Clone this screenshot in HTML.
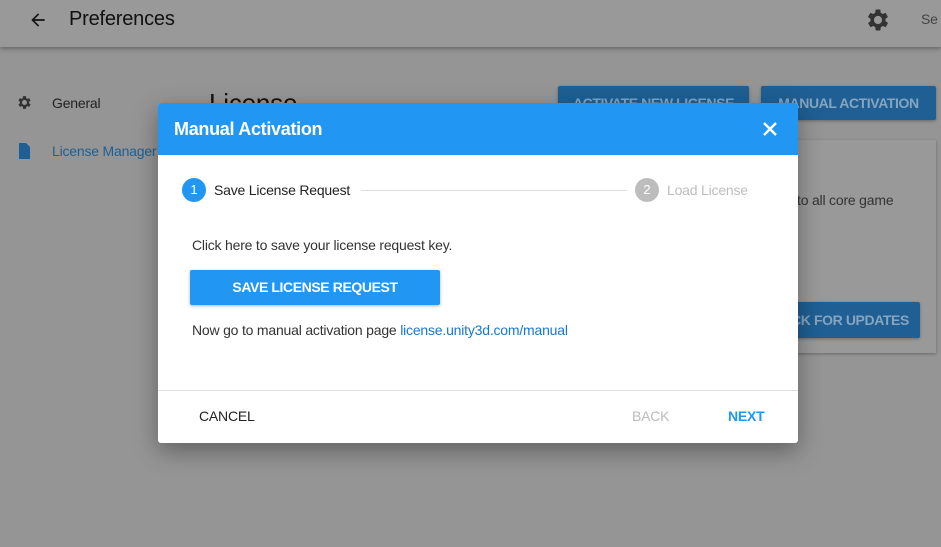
<!DOCTYPE html>
<html><head><meta charset="utf-8"><style>
*{margin:0;padding:0;box-sizing:border-box}
body{width:941px;height:547px;overflow:hidden;background:#959595;font-family:"Liberation Sans",sans-serif;position:relative}
.hdr{position:absolute;left:0;top:0;width:941px;height:47px;background:#999;box-shadow:0 2px 4px rgba(0,0,0,.3)}
.t{position:absolute;white-space:nowrap;letter-spacing:-0.2px}
.btn{position:absolute;background:#1f5f93;color:#85a5c0;font-weight:bold;font-size:14px;text-align:center;line-height:34px;border-radius:2px;box-shadow:0 1px 3px rgba(0,0,0,.3);letter-spacing:-0.4px}
.card{position:absolute;left:780px;top:140px;width:156px;height:213px;background:#999;box-shadow:0 1px 3px rgba(0,0,0,.3)}
.dlg{position:absolute;left:158px;top:103px;width:640px;height:340px;background:#fff;border-radius:3px;box-shadow:0 8px 24px rgba(0,0,0,.35);overflow:hidden}
.dh{height:52px;background:#2196f3;color:#fff;font-size:18px;font-weight:bold;line-height:52px;padding-left:16px;position:relative;letter-spacing:-0.3px}
.circ{position:absolute;width:24px;height:24px;border-radius:50%;color:#fff;font-size:13px;text-align:center;line-height:24px}
</style></head><body>
<div class="hdr">
<svg class="t" style="left:28px;top:10px" width="20" height="20" viewBox="0 0 24 24"><path d="M20 11H7.8l5.6-5.6L12 4l-8 8 8 8 1.4-1.4L7.8 13H20z" fill="#111"/></svg>
<div class="t" style="left:69px;top:8px;font-size:20px;color:#111">Preferences</div>
<svg class="t" style="left:864px;top:6px" width="28" height="28" viewBox="0 0 24 24"><path fill="#333" d="M19.4 13a7.5 7.5 0 000-2l2.1-1.6-2-3.5-2.5 1a7 7 0 00-1.7-1L15 3h-4l-.4 2.9a7 7 0 00-1.7 1l-2.5-1-2 3.5L6.6 11a7.5 7.5 0 000 2l-2.1 1.6 2 3.5 2.5-1c.5.4 1.1.7 1.7 1L11 21h4l.4-2.9c.6-.3 1.2-.6 1.7-1l2.5 1 2-3.5zM13 15.5a3.5 3.5 0 110-7 3.5 3.5 0 010 7z" transform="translate(-1 0)"/></svg>
<div class="t" style="left:921px;top:11px;font-size:14px;color:#444">Se</div>
</div>
<svg class="t" style="left:16px;top:94px" width="17" height="17" viewBox="0 0 24 24"><path fill="#333" d="M19.4 13a7.5 7.5 0 000-2l2.1-1.6-2-3.5-2.5 1a7 7 0 00-1.7-1L15 3h-4l-.4 2.9a7 7 0 00-1.7 1l-2.5-1-2 3.5L6.6 11a7.5 7.5 0 000 2l-2.1 1.6 2 3.5 2.5-1c.5.4 1.1.7 1.7 1L11 21h4l.4-2.9c.6-.3 1.2-.6 1.7-1l2.5 1 2-3.5zM13 15.5a3.5 3.5 0 110-7 3.5 3.5 0 010 7z" transform="translate(-1 0)"/></svg>
<div class="t" style="left:52px;top:95px;font-size:14px;color:#222">General</div>
<svg class="t" style="left:17px;top:143px" width="14" height="16" viewBox="0 0 14 16"><path fill="#1f5f93" d="M2 0h7l4 4v12H2z"/></svg>
<div class="t" style="left:52px;top:143px;font-size:14px;color:#1f5f93">License Manager</div>
<div class="t" style="left:209px;top:88px;font-size:26px;color:#111">License</div>
<div class="btn" style="left:558px;top:86px;width:191px">ACTIVATE NEW LICENSE</div>
<div class="btn" style="left:761px;top:86px;width:175px">MANUAL ACTIVATION</div>
<div class="card">
<div class="t" style="left:17px;top:52px;font-size:14px;color:#333">to all core game</div>
</div>
<div class="btn" style="left:780px;top:302px;width:140px;line-height:36px">CK FOR UPDATES</div>
<div class="dlg">
<div class="dh">Manual Activation
<svg style="position:absolute;left:604px;top:18px" width="16" height="16" viewBox="0 0 16 16"><path d="M2 2L14 14M14 2L2 14" stroke="#fff" stroke-width="2.4"/></svg></div>
<div class="circ" style="left:24px;top:75px;background:#2196f3">1</div>
<div class="t" style="left:56px;top:79px;font-size:14px;color:#222">Save License Request</div>
<div class="t" style="left:203px;top:87px;width:266px;height:1px;background:#ddd"></div>
<div class="circ" style="left:477px;top:75px;background:#bdbdbd">2</div>
<div class="t" style="left:509px;top:79px;font-size:14px;color:#bdbdbd">Load License</div>
<div class="t" style="left:34px;top:134px;font-size:14px;color:#333">Click here to save your license request key.</div>
<div class="t" style="left:32px;top:167px;width:250px;height:35px;background:#2196f3;color:#fff;font-weight:bold;font-size:14px;text-align:center;line-height:35px;border-radius:2px;box-shadow:0 1px 3px rgba(0,0,0,.3);letter-spacing:-0.4px">SAVE LICENSE REQUEST</div>
<div class="t" style="left:34px;top:219px;font-size:14px;color:#333">Now go to manual activation page <span style="color:#1976d2">license.unity3d.com/manual</span></div>
<div class="t" style="left:0;top:287px;width:640px;height:1px;background:#e0e0e0"></div>
<div class="t" style="left:41px;top:305px;font-size:14px;color:#222">CANCEL</div>
<div class="t" style="left:474px;top:305px;font-size:14px;color:#bbb">BACK</div>
<div class="t" style="left:570px;top:305px;font-size:14px;color:#2196f3;font-weight:bold">NEXT</div>
</div>
</body></html>
